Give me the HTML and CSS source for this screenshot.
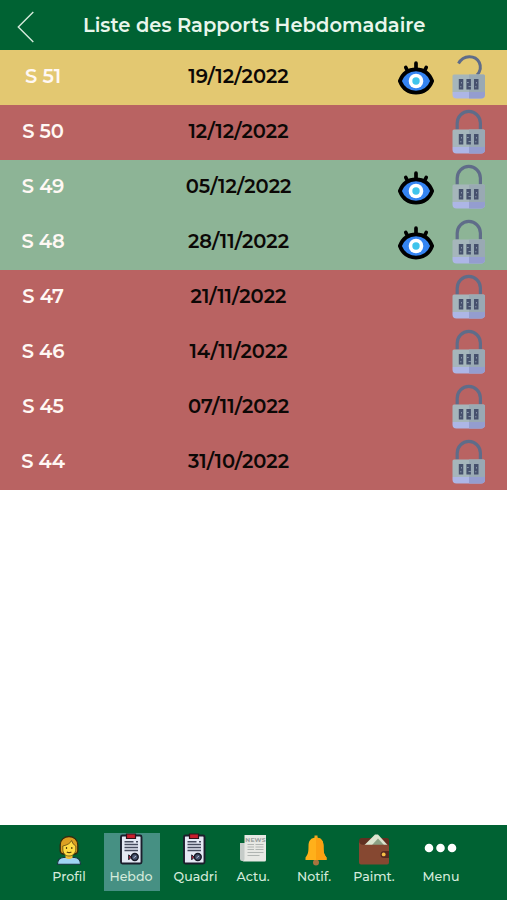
FILE: index.html
```html
<!DOCTYPE html>
<html lang="fr">
<head>
<meta charset="utf-8">
<title>Liste des Rapports Hebdomadaire</title>
<link rel="stylesheet" href="styles.css">
</head>
<body>
<svg class="defs" width="0" height="0" aria-hidden="true">
  <symbol id="eye" viewBox="0 0 38 36">
    <path d="M8.800 7.500l2 4M19 3.200v6M29.200 7.500l-2 4" fill="none" stroke="#000" stroke-width="3.700" stroke-linecap="round"/>
    <path d="M2.800 21C6 12.500 12 9.300 19 9.300S32 12.500 35.200 21C32 29 26 32.600 19 32.600S6 29 2.800 21Z" fill="#3584f2" stroke="#000" stroke-width="3.700" stroke-linejoin="round"/>
    <circle cx="19" cy="21" r="7.300" fill="#fff"/>
    <circle cx="19" cy="21" r="3.700" fill="#3fc4ec"/>
  </symbol>
  <symbol id="lock-body" viewBox="0 0 36 46">
    <path d="M1.500 22q0-1.500 1.500-1.500h29.500q1.500 0 1.500 1.500v16H1.500Z" fill="#a6b6bb"/>
    <path d="M18 20.500h14.500q1.500 0 1.500 1.500v16H18Z" fill="#99a9b3"/>
    <path d="M1.500 38H34v2.500q0 4-4 4H5.500q-4 0-4-4Z" fill="#adb6e6"/>
    <path d="M18 38h16v2.500q0 4-4 4H18Z" fill="#949dcf"/>
    <path d="M7.800 25h4.500v10.500H7.800ZM15.400 25h4.500v10.500h-4.500ZM23 25h4.500v10.500H23Z" fill="#46516d"/>
    <path d="M10.500 28v1.500M9 32.800h1.500M16 28.500h1.800M17.500 32.500h2.400M25.500 28v1.500M24 32.800h1.500" stroke="#8694a8" stroke-width="1"/>
  </symbol>
  <symbol id="lock" viewBox="0 0 36 46">
    <path d="M6.200 20.500v-6.500a11.600 11.600 0 0 1 23.200 0v6.500" fill="none" stroke="#5f6c89" stroke-width="3.200"/>
    <use href="#lock-body" width="36" height="46"/>
  </symbol>
  <symbol id="unlock" viewBox="0 0 36 46">
    <path d="M7.500 9.500C12.500.8 24 .8 28.300 8.500c2.300 5 .9 9-2.300 12.500" fill="none" stroke="#5f6c89" stroke-width="3"/>
    <use href="#lock-body" width="36" height="46"/>
  </symbol>
  <symbol id="report" viewBox="0 0 24 34">
    <rect x="2" y="3.500" width="20.500" height="28" rx="1.500" fill="#e4e9f4" stroke="#1b1e2c" stroke-width="1.900"/>
    <path d="M7.500 2h9v4.500h-9Z" fill="#c81f2c" stroke="#30121a" stroke-width="1.200"/>
    <path d="M5.500 9.700h9M5.500 12.500h13.500M5.500 15.500h13.500M5.500 18.500h13.500M17 9.700h2" stroke="#474d5f" stroke-width="1.400"/>
    <path d="M9.700 22.800v5l2.500-2.500Z" fill="#c8283f" stroke="#1b1e2c"/>
    <circle cx="15.800" cy="25" r="3.400" fill="#46526e" stroke="#171a27" stroke-width="1.500"/>
    <path d="M14.500 26l2.500-2" stroke="#b9c5da" stroke-width="1"/>
  </symbol>
</svg>
<div class="app">
  <header class="topbar">
    <svg class="back" width="18" height="32" viewBox="0 0 18 32"><path d="M16.300 1L1.300 16l15 15" fill="none" stroke="#d5eadb" stroke-width="1.400"/></svg>
    <h1 class="title">Liste des Rapports Hebdomadaire</h1>
  </header>
  <main class="list">
    <div class="row pending"><span class="week">S 51</span><span class="date">19/12/2022</span><svg class="eye"><use href="#eye"/></svg><svg class="lock"><use href="#unlock"/></svg></div>
    <div class="row late"><span class="week">S 50</span><span class="date">12/12/2022</span><svg class="lock"><use href="#lock"/></svg></div>
    <div class="row done"><span class="week">S 49</span><span class="date">05/12/2022</span><svg class="eye"><use href="#eye"/></svg><svg class="lock"><use href="#lock"/></svg></div>
    <div class="row done"><span class="week">S 48</span><span class="date">28/11/2022</span><svg class="eye"><use href="#eye"/></svg><svg class="lock"><use href="#lock"/></svg></div>
    <div class="row late"><span class="week">S 47</span><span class="date">21/11/2022</span><svg class="lock"><use href="#lock"/></svg></div>
    <div class="row late"><span class="week">S 46</span><span class="date">14/11/2022</span><svg class="lock"><use href="#lock"/></svg></div>
    <div class="row late"><span class="week">S 45</span><span class="date">07/11/2022</span><svg class="lock"><use href="#lock"/></svg></div>
    <div class="row late"><span class="week">S 44</span><span class="date">31/10/2022</span><svg class="lock"><use href="#lock"/></svg></div>
  </main>
  <nav class="tabs">
    <div class="tab">
      <svg width="26" height="34" viewBox="0 0 26 34">
        <path d="M1.500 32.300q0-6.300 6-6.800h11q6 .5 6 6.800Z" fill="#9fd4f4" stroke="#17333d" stroke-width="1.100"/>
        <path d="M9.500 22h7v4q-3.500 2-7 0Z" fill="#efbd36"/>
        <path d="M4.200 18.500V13C4.200 8 8 4.500 13 4.500S21.800 8 21.800 13v5.500q0 3-3 3.500H7.200q-3-.5-3-3.500Z" fill="#dca022" stroke="#33290d" stroke-width="1.300"/>
        <path d="M6.800 14q7-1.500 8.800-5.500 1 4 4.200 5.500v3c0 4.300-3 7-6.800 7s-6.200-2.700-6.200-7Z" fill="#ffdb45" stroke="#5e4810" stroke-width=".8"/>
        <path d="M10.500 15v1.900M15.800 15v1.900M10.800 20q2.200 1.400 4.600 0" fill="none" stroke="#56400c" stroke-width="1.200"/>
      </svg>
      <span>Profil</span>
    </div>
    <div class="tab active"><svg width="24" height="34"><use href="#report"/></svg><span>Hebdo</span></div>
    <div class="tab quadri"><svg width="24" height="34"><use href="#report"/></svg><span>Quadri</span></div>
    <div class="tab">
      <svg width="28" height="34" viewBox="0 0 28 34">
        <path d="M1 11h5v18H3q-2 0-2-2Z" fill="#c5cbc8"/>
        <path d="M5.500 3H27v25q0 1.500-1.500 1.500h-22q2-.5 2-2.500Z" fill="#e7e8e4"/>
        <text class="news" x="16.500" y="9.600" text-anchor="middle">NEWS</text>
        <path d="M8.500 12.500h6.500M8.500 15h6.500M8.500 17.500h6.500M16.500 12.500h8M16.500 15h8M16.500 17.500h8M8.500 20.500h16M8.500 23.500h12" stroke="#b0b5b2" stroke-width="1"/>
      </svg>
      <span>Actu.</span>
    </div>
    <div class="tab">
      <svg class="bell" width="24" height="34" viewBox="0 0 24 34">
        <circle cx="12" cy="30.500" r="3" fill="#a8743e"/>
        <path d="M10.500 7V3.500h3V7" fill="#f5a623"/>
        <path d="M12 5.500c-5.200 0-7.500 3.500-7.500 8.500 0 6-.3 8-3 11.500V28h21v-2.500C19.800 22 19.500 20 19.500 14c0-5-2.300-8.500-7.500-8.500Z" fill="#ffb01a"/>
        <path d="M12 5.500c5.200 0 7.500 3.500 7.500 8.500 0 6 .3 8 3 11.500V28H12Z" fill="#fca012"/>
      </svg>
      <span>Notif.</span>
    </div>
    <div class="tab">
      <svg width="32" height="34" viewBox="0 0 32 34">
        <path d="M1 9q0-3 3-3h25q2 0 2 2v7H1Z" fill="#613021"/>
        <path d="M6.500 13L17 2.500h3L29.500 13Z" fill="#dce5cf"/>
        <path d="M14 13l6-6.500L26 13Z" fill="#8ba184"/>
        <path d="M1 9q.5 3.800 4 3.800h24q2 0 2 2V30.500q0 2-2 2H3q-2 0-2-2Z" fill="#864831"/>
        <path d="M31 19v7h-5q-3.500 0-3.500-3.500T26 19Z" fill="#572a20"/>
        <circle cx="25.700" cy="22.400" r="1.900" fill="#f5bf46"/>
      </svg>
      <span>Paimt.</span>
    </div>
    <div class="tab">
      <svg width="34" height="34" viewBox="0 0 34 34"><path d="M5 16h.01M16.500 16h.01M28 16h.01" stroke="#fff" stroke-width="8.600" stroke-linecap="round"/></svg>
      <span>Menu</span>
    </div>
  </nav>
</div>
</body>
</html>
```
FILE: styles.css
```css
* { box-sizing: border-box; }
body {
  margin: 0;
  background: #fff;
  font-family: Montserrat, Inter, "Open Sans", sans-serif;
}
svg { display: block; }
.defs { height: 0; }
.app { height: 900px; display: flex; flex-direction: column; }
.topbar {
  height: 50px;
  padding: 1px 0 0 17px;
  display: flex;
  align-items: center;
  background: #006233;
}
.back { margin-top: 2px; flex: none; }
.title {
  width: 344px;
  margin: 0 0 2px 48px;
  color: #e9f6ec;
  font-size: 19.500px;
  font-weight: 600;
  letter-spacing: .02px;
  white-space: nowrap;
}
.list { flex: 1; }
.row {
  height: 55px;
  display: grid;
  grid-template-columns: 86px 305px 55px 45px;
  align-items: center;
  font-size: 19.500px;
  font-weight: 600;
}
.week, .date { padding-bottom: 3px; text-align: center; white-space: nowrap; }
.week { color: #fff8f4; letter-spacing: -.15px; }
.date { color: #0c0806; }
.eye { width: 38px; height: 36px; grid-column: 3; margin-left: 6px; }
.lock { width: 36px; height: 46px; grid-column: 4; margin: 0 0 1px 5px; }
.pending { background: #e3c871; }
.late { background: #b96362; }
.done { background: #8db496; }
.tabs {
  height: 75px;
  padding: 7px 0 9px 36px;
  display: grid;
  grid-template-columns: 66px 60px 67px 48px 74px 46px 88px;
  background: #006233;
}
.tab {
  display: flex;
  flex-direction: column;
  align-items: center;
  color: #d5ebdc;
  font-size: 12.600px;
  font-weight: 500;
  line-height: 20px;
}
.tab svg { flex: none; }
.tab span { margin-top: 1px; white-space: nowrap; }
.active { width: 56px; margin: 1px 0 0 2px; background: #469083; }
.active svg { margin: -1px 2px 0 0; }
.active span { margin-right: 2px; }
.quadri svg { margin-right: 3px; }
.bell { margin-left: 3px; }
.news { font-size: 6px; font-weight: 700; letter-spacing: .2px; fill: #9ba19f; }
```
